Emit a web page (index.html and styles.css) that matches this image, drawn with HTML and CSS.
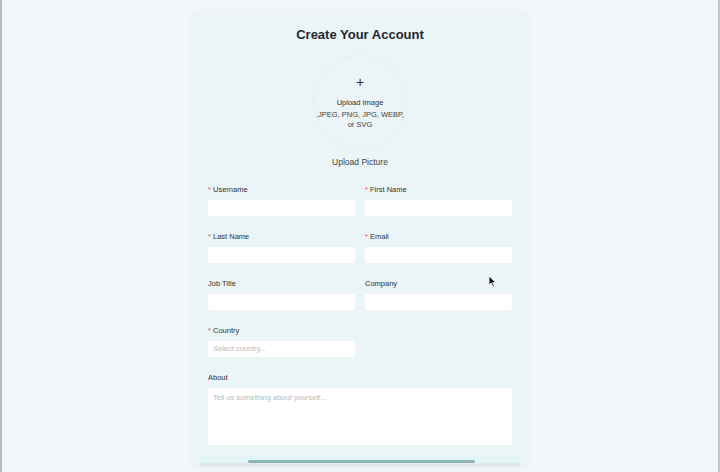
FILE: index.html
```html
<!DOCTYPE html>
<html lang="en">
<head>
  <meta charset="UTF-8" />
  <meta name="viewport" content="width=device-width, initial-scale=1.0"/>
  <title>Create Your Account</title>
  <link rel="stylesheet" href="styles.css">
</head>
<body>
  <div id="card">
    <h1>Create Your Account</h1>

    <div class="upload">
      <label class="upload-circle">
        <span class="plus">+</span>
        <span class="upload-title">Upload Image</span>
        <span class="upload-types">.JPEG, PNG, JPG, WEBP,<br>or SVG</span>
      </label>
      <div class="upload-caption">Upload Picture</div>
    </div>

    <form class="fields">
      <div class="field">
        <label><span class="req">*</span> Username</label>
        <input type="text" />
      </div>
      <div class="field">
        <label><span class="req">*</span> First Name</label>
        <input type="text" />
      </div>
      <div class="field">
        <label><span class="req">*</span> Last Name</label>
        <input type="text" />
      </div>
      <div class="field">
        <label><span class="req">*</span> Email</label>
        <input type="text" />
      </div>
      <div class="field">
        <label>Job Title</label>
        <input type="text" />
      </div>
      <div class="field">
        <label>Company</label>
        <input type="text" />
      </div>
      <div class="field">
        <label><span class="req">*</span> Country</label>
        <div class="select">Select country...</div>
      </div>
      <div class="field wide">
        <label>About</label>
        <textarea placeholder="Tell us something about yourself..."></textarea>
      </div>
    </form>

    <div class="track"><div class="thumb"></div></div>
  </div>

  <!-- mouse pointer -->
  <svg class="pointer" width="9" height="13" viewBox="0 0 9 13">
    <path d="M1 1 L1 10 L3.2 8 L5 12 L6.4 11.3 L4.7 7.5 L7.8 7.5 Z" fill="#111" stroke="#fff" stroke-width="0.8"/>
  </svg>
</body>
</html>
```

FILE: styles.css
```css
body {
  margin: 0;
  height: 472px;
  font-family: "Liberation Sans", Arial, sans-serif;
  background: #f3f7fa;
  color: #222;
  border-left: 2px solid #b9bdc1;
  border-right: 2px solid #c2c6ca;
  box-sizing: border-box;
  overflow: hidden;
}

#card {
  width: 336px;
  margin: 12px auto 0;
  padding: 15px 16px 0;
  box-sizing: border-box;
  background: #ebf4f6;
  border-radius: 8px 8px 0 0;
  box-shadow: 0 0 6px rgba(160, 180, 190, 0.12);
}

h1 {
  margin: 0;
  font-size: 13px;
  line-height: 16px;
  font-weight: bold;
  text-align: center;
  color: #1e2830;
}

.upload {
  display: flex;
  flex-direction: column;
  align-items: center;
}

.upload-circle {
  width: 94px;
  height: 94px;
  margin-top: 12px;
  border-radius: 50%;
  border: 1px dashed #e1eaed;
  box-sizing: border-box;
  display: flex;
  flex-direction: column;
  align-items: center;
  justify-content: center;
  text-align: center;
  cursor: pointer;
}

.plus {
  font-size: 14px;
  line-height: 14px;
  color: #333;
  margin-bottom: 9px;
}

.upload-title {
  font-size: 7.5px;
  line-height: 10px;
  color: #333;
  margin-bottom: 2px;
}

.upload-types {
  font-size: 7.5px;
  line-height: 10px;
  color: #444;
}

.upload-caption {
  margin-top: 7px;
  font-size: 8.5px;
  line-height: 12px;
  color: #444;
}

.fields {
  display: grid;
  grid-template-columns: 1fr 1fr;
  column-gap: 10px;
  row-gap: 16px;
  margin-top: 17px;
}

.field {
  display: flex;
  flex-direction: column;
  gap: 5px;
}

.field.wide {
  grid-column: 1 / 3;
}

.field label {
  font-size: 7.5px;
  line-height: 10px;
  color: #333;
}

.req {
  color: #d45b5b;
}

.field input,
.select {
  height: 16px;
  border: none;
  border-radius: 2px;
  background: #fff;
  box-shadow: 0 0 0 1px #eef3f5;
  box-sizing: border-box;
  padding: 0 5px;
  font-size: 7.5px;
  font-family: inherit;
}

.select {
  line-height: 16px;
  color: #b5bcc0;
}

.field textarea {
  height: 57px;
  border: none;
  border-radius: 2px;
  background: #fff;
  box-shadow: 0 0 0 1px #eef3f5;
  box-sizing: border-box;
  padding: 5px;
  resize: none;
  font-size: 7.5px;
  font-family: inherit;
}

.field textarea::placeholder {
  color: #b5bcc0;
}

.track {
  margin: 10px -8px 0;
  height: 8px;
  background: #e2f6f8;
  border-bottom: 4px solid #e3e9eb;
  display: flex;
  align-items: flex-end;
  justify-content: center;
}

.thumb {
  width: 227px;
  height: 3px;
  border-radius: 2px;
  background: #8eb5b5;
  margin-left: 2px;
}

.pointer {
  position: absolute;
  left: 488px;
  top: 275px;
}
```
